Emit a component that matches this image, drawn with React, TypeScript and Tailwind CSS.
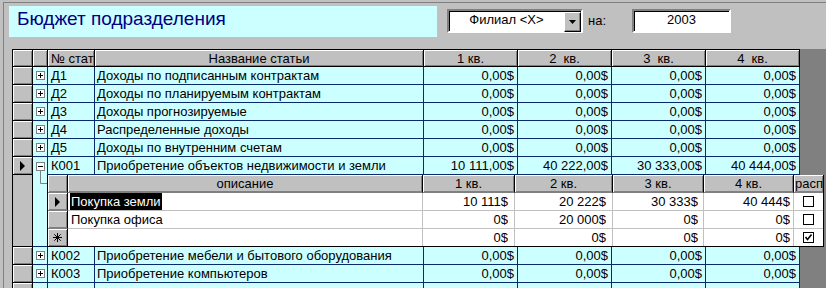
import React from 'react';

type MainRow = { code: string; name: string; q: string[] };

const zero = ['0,00$', '0,00$', '0,00$', '0,00$'];

const topRows: MainRow[] = [
  { code: 'Д1', name: 'Доходы по подписанным контрактам', q: zero },
  { code: 'Д2', name: 'Доходы по планируемым контрактам', q: zero },
  { code: 'Д3', name: 'Доходы прогнозируемые', q: zero },
  { code: 'Д4', name: 'Распределенные доходы', q: zero },
  { code: 'Д5', name: 'Доходы по внутренним счетам', q: zero },
];

const bottomRows: MainRow[] = [
  { code: 'К002', name: 'Приобретение мебели и бытового оборудования', q: zero },
  { code: 'К003', name: 'Приобретение компьютеров', q: zero },
];

const subRows = [
  { name: 'Покупка земли', q: ['10 111$', '20 222$', '30 333$', '40 444$'], sel: true, checked: false },
  { name: 'Покупка офиса', q: ['0$', '20 000$', '0$', '0$'], sel: false, checked: false },
  { name: '', q: ['0$', '0$', '0$', '0$'], sel: false, checked: true, isNew: true },
];

const bevel = 'bg-[#c0c0c0] shadow-[inset_1px_1px_0_#fff,inset_-1px_-1px_0_#808080]';
const headCell = `flex items-center justify-center h-[18px] border-t border-b border-r border-black ${bevel}`;
const cell = 'flex items-center h-[18px] bg-[#ccffff] border-r border-b border-[#0b2a6b] overflow-hidden whitespace-nowrap';
const qCols = ['w-[94px]', 'w-[94px]', 'w-[94px]', 'w-[94px]'];
const subQCols = ['w-[92px] pr-[6px]', 'w-[98px] pr-[6px]', 'w-[91px] pr-[5px]', 'w-[90px] pr-[3px]'];

function PlusBox() {
  return (
    <svg width="9" height="9" viewBox="0 0 9 9">
      <rect x="0.5" y="0.5" width="8" height="8" fill="#fff" stroke="#808080" />
      <path d="M2 4.5H7M4.5 2V7" stroke="#000" />
    </svg>
  );
}

function Arrow() {
  return (
    <svg width="5" height="10" viewBox="0 0 5 10">
      <polygon points="0,0 5,5 0,10" fill="#000" />
    </svg>
  );
}

function Star() {
  return (
    <svg width="9" height="9" viewBox="0 0 9 9" stroke="#000" strokeWidth="1">
      <path d="M4.5 0V9M0 4.5H9M1.3 1.3L7.7 7.7M7.7 1.3L1.3 7.7" />
    </svg>
  );
}

function Check({ on }: { on: boolean }) {
  return (
    <svg width="11" height="11" viewBox="0 0 11 11">
      <rect x="0.5" y="0.5" width="10" height="10" fill="#fff" stroke="#000" />
      {on && <path d="M2.5 5L4.5 7.5L8.5 2.5" fill="none" stroke="#000" strokeWidth="1.6" />}
    </svg>
  );
}

function DataRow({ r }: { r: MainRow }) {
  return (
    <div className="flex w-[787px]">
      <div className={`w-[20px] h-[18px] border-r border-b border-black ${bevel}`} />
      <div className={`${cell} w-[15px] justify-center`}>
        <PlusBox />
      </div>
      <div className={`${cell} w-[47px] pl-[3px]`}>{r.code}</div>
      <div className={`${cell} w-[329px] pl-[2px]`}>{r.name}</div>
      {r.q.map((v, i) => (
        <div key={i} className={`${cell} ${qCols[i]} justify-end pr-[3px]`}>
          {v}
        </div>
      ))}
    </div>
  );
}

export default function App() {
  return (
    <div className="w-[826px] h-[288px] overflow-hidden bg-[#c0c0c0] text-[13px] leading-none text-black font-['Liberation_Sans',Arial,sans-serif]">
      <div className="mt-[2px] ml-[3px] h-full border-t border-l border-[#808080]">
        {/* Шапка формы */}
        <div className="flex h-[46px]">
          <div className="ml-[5px] mt-[3px] w-[428px] h-[31px] bg-[#ccffff] pl-[8px] pt-[2px] text-[19px] leading-[22px] text-[#000080]">
            Бюджет подразделения
          </div>
          <div className="ml-[10px] mt-[6px] w-[136px] h-[24px] flex bg-white border-2 border-t-[#808080] border-l-[#808080] border-r-white border-b-white shadow-[inset_1px_1px_0_#000]">
            <div className="flex-1 flex items-center justify-center pb-[3px]">Филиал &lt;X&gt;</div>
            <div className="w-[17px] h-[20px] mt-[1px] flex items-center justify-center bg-[#c0c0c0] border border-t-white border-l-white border-r-black border-b-black shadow-[inset_-1px_-1px_0_#808080]">
              <svg width="7" height="4" viewBox="0 0 7 4">
                <polygon points="0,0 7,0 3.5,4" fill="#000" />
              </svg>
            </div>
          </div>
          <div className="ml-[5px] w-[44px] mt-[5px] h-[24px] flex items-center">на:</div>
          <div className="mt-[6px] w-[99px] h-[24px] flex items-center justify-center pb-[3px] bg-white border-2 border-t-[#808080] border-l-[#808080] border-r-white border-b-white shadow-[inset_1px_1px_0_#000]">
            2003
          </div>
        </div>

        {/* Таблица */}
        <div className="ml-[8px] h-full border-l border-black bg-[#808080]">
          <div className="flex w-[787px]">
            <div className={`${headCell} w-[20px]`} />
            <div className={`${headCell} w-[15px]`} />
            <div className={`${headCell} w-[47px] !justify-start pl-[3px] overflow-hidden whitespace-nowrap`}>№ стат</div>
            <div className={`${headCell} w-[329px]`}>Название статьи</div>
            <div className={`${headCell} w-[94px] whitespace-pre`}>1 кв.</div>
            <div className={`${headCell} w-[94px] whitespace-pre`}>2  кв.</div>
            <div className={`${headCell} w-[94px] whitespace-pre`}>3  кв.</div>
            <div className={`${headCell} w-[94px] whitespace-pre`}>4  кв.</div>
          </div>

          {topRows.map((r) => (
            <DataRow key={r.code} r={r} />
          ))}

          {/* К001 раскрыта */}
          <div className="flex w-[787px]">
            <div className={`w-[20px] h-[18px] flex items-center justify-center border-r border-b border-black ${bevel}`}>
              <Arrow />
            </div>
            <div className="w-[15px] h-[18px] bg-[#ccffff] border-r border-[#0b2a6b]">
              <svg width="14" height="18" viewBox="0 0 14 18">
                <rect x="3.5" y="5.5" width="8" height="8" fill="#fff" stroke="#808080" />
                <path d="M5 9.5H10" stroke="#000" />
                <path d="M7.5 14V18" stroke="#808080" />
              </svg>
            </div>
            <div className={`${cell} w-[47px] pl-[3px]`}>К001</div>
            <div className={`${cell} w-[329px] pl-[2px]`}>Приобретение объектов недвижимости и земли</div>
            {['10 111,00$', '40 222,00$', '30 333,00$', '40 444,00$'].map((v, i) => (
              <div key={i} className={`${cell} ${qCols[i]} justify-end pr-[3px]`}>
                {v}
              </div>
            ))}
          </div>

          {/* Подтаблица */}
          <div className="flex w-[811px] h-[72px]">
            <div className="w-[20px] bg-[#c0c0c0] border-r border-b border-black" />
            <div className="w-[14px] bg-[#ccffff] border-b border-[#0b2a6b]">
              <svg width="14" height="20" viewBox="0 0 14 20">
                <path d="M7.5 0V8.5H14" fill="none" stroke="#808080" />
              </svg>
            </div>
            <div className="w-[777px] bg-white border-l border-r border-b border-black flex flex-col">
              <div className="flex h-[18px]">
                <div className={`w-[20px] h-[18px] border-r border-b border-r-black border-b-[#808080] ${bevel}`} />
                <div className={`w-[355px] h-[18px] flex items-center justify-center border-r border-b border-r-black border-b-[#808080] ${bevel}`}>описание</div>
                {['w-[92px]', 'w-[98px]', 'w-[91px]', 'w-[90px]'].map((w, i) => (
                  <div key={i} className={`${w} h-[18px] flex items-center justify-center border-r border-b border-r-black border-b-[#808080] ${bevel}`}>
                    {i + 1} кв.
                  </div>
                ))}
                <div className={`w-[29px] h-[18px] flex items-center pl-[1px] overflow-hidden whitespace-nowrap border-b border-b-[#808080] ${bevel}`}>расп</div>
              </div>
              {subRows.map((s, idx) => {
                const last = idx === subRows.length - 1;
                const rowH = last ? 'h-[17px]' : 'h-[18px] border-b';
                return (
                  <div key={idx} className="flex">
                    <div className={`w-[20px] ${rowH} flex items-center justify-center border-r border-r-black border-b-[#808080] ${bevel}`}>
                      {s.sel && <Arrow />}
                      {s.isNew && <Star />}
                    </div>
                    <div className={`w-[355px] ${rowH} flex items-center pl-[2px] border-r border-[#c0c0c0]`}>
                      {s.sel ? (
                        <span className="h-[17px] flex items-center bg-black text-white px-[1px]">{s.name}</span>
                      ) : (
                        <span className="pl-[1px]">{s.name}</span>
                      )}
                    </div>
                    {s.q.map((v, i) => (
                      <div key={i} className={`${subQCols[i]} ${rowH} flex items-center justify-end border-r border-[#c0c0c0]`}>
                        {v}
                      </div>
                    ))}
                    <div className={`w-[29px] ${rowH} flex items-center justify-center border-[#c0c0c0]`}>
                      <Check on={s.checked} />
                    </div>
                  </div>
                );
              })}
            </div>
          </div>

          {bottomRows.map((r) => (
            <DataRow key={r.code} r={r} />
          ))}

          <div className="flex w-[787px]">
            <div className={`w-[20px] h-[18px] border-r border-b border-black ${bevel}`} />
            <div className={`${cell} w-[15px]`} />
            <div className={`${cell} w-[47px]`} />
            <div className={`${cell} w-[329px]`} />
            {qCols.map((w, i) => (
              <div key={i} className={`${cell} ${w}`} />
            ))}
          </div>
        </div>
      </div>
    </div>
  );
}
